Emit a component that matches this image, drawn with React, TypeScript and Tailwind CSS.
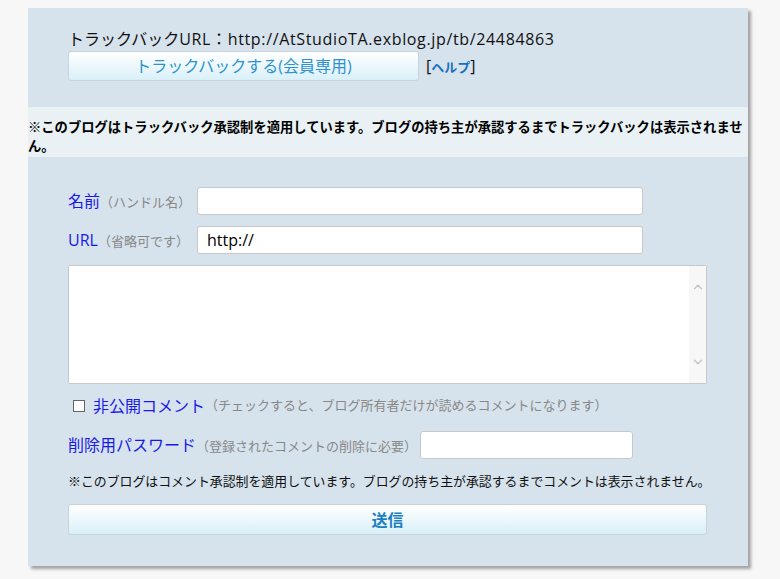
import { ChevronDown, ChevronUp } from "lucide-react";

const FONT = "font-['Open_Sans','Noto_Sans_CJK_JP',sans-serif]";

export default function App() {
  return (
    <div className={`min-h-screen bg-[#f7f7f7] pt-2 pl-[28px] ${FONT}`}>
      <div className="w-[720px] bg-[#d6e2ec] shadow-[3px_3px_3px_rgba(0,0,0,0.35)]">
        {/* trackback */}
        <div className="px-[40px] pt-[21px] pb-[26px]">
          <p className="text-[16px] leading-[20px] text-[#111]">
            トラックバック<span className="tracking-[0.65px]">URL：http://AtStudioTA.exblog.jp/tb/24484863</span>
          </p>
          <div className="mt-[2px] flex items-center gap-[7px]">
            <button
              type="button"
              className="h-[30px] w-[351px] rounded-[3px] border border-[#c9d3dc] bg-gradient-to-b from-white to-[#d9f0f8] text-[16px] text-[#2f92cf]"
            >
              トラックバックする(会員専用)
            </button>
            <span className="text-[16px] text-[#111]">
              [<a className="font-['Noto_Sans_CJK_JP',sans-serif] text-[13px] font-bold text-[#1670c0]">ヘルプ</a>]
            </span>
          </div>
        </div>

        {/* trackback notice */}
        <div className="bg-[#e9f1f4] pt-[10px] pb-[2px]">
          <p className="font-['Noto_Sans_CJK_JP',sans-serif] text-[13.3px] leading-[19px] font-bold text-black">
            ※このブログはトラックバック承認制を適用しています。ブログの持ち主が承認するまでトラックバックは表示されません。
          </p>
        </div>

        {/* comment form */}
        <form className="px-[40px] pt-[30px] pb-[31px]">
          <div className="flex items-center">
            <label className="w-[129px] text-[16px] text-[#1a1ae8]">
              名前<span className="text-[13px] text-[#888]">（ハンドル名）</span>
            </label>
            <input className="h-[28px] w-[446px] rounded-[3px] border border-[#c8c8c8] bg-white px-2 text-[16px] outline-none" />
          </div>
          <div className="mt-[11px] flex items-center">
            <label className="w-[129px] text-[16px] text-[#1a1ae8]">
              URL<span className="text-[13px] text-[#888]">（省略可です）</span>
            </label>
            <input
              defaultValue="http://"
              className="h-[28px] w-[446px] rounded-[3px] border border-[#c8c8c8] bg-white px-[9px] text-[16px] text-black outline-none"
            />
          </div>
          <div className="mt-[11px] flex h-[119px] w-[639px] rounded-[2px] border border-[#c8c8c8] bg-white">
            <textarea className="flex-1 resize-none bg-white outline-none" />
            <div className="flex w-[17px] flex-col items-center justify-between bg-[#f7f7f7] py-[14px]">
              <ChevronUp className="h-[14px] w-[14px] text-[#c4c4c4]" strokeWidth={2.5} />
              <ChevronDown className="h-[14px] w-[14px] text-[#c4c4c4]" strokeWidth={2.5} />
            </div>
          </div>

          <div className="mt-[10px] flex items-center pl-[5px]">
            <span className="h-[12px] w-[12px] border border-[#666] bg-white" />
            <span className="ml-[8px] text-[16px] text-[#1a1ae8]">非公開コメント</span>
            <span className="text-[13px] text-[#888]">
              （チェックすると、ブログ所有者だけが読めるコメントになります）
            </span>
          </div>

          <div className="mt-[13px] flex items-center">
            <label className="text-[16px] text-[#1a1ae8]">
              削除用パスワード<span className="text-[13px] text-[#888]">（登録されたコメントの削除に必要）</span>
            </label>
            <input
              type="password"
              className="ml-[3px] h-[28px] w-[213px] rounded-[3px] border border-[#c8c8c8] bg-white px-2 outline-none"
            />
          </div>

          <p className="mt-[12px] whitespace-nowrap text-[12.9px] leading-[20px] text-[#111]">
            ※このブログはコメント承認制を適用しています。ブログの持ち主が承認するまでコメントは表示されません。
          </p>

          <button
            type="button"
            className="mt-[13px] h-[31px] w-[639px] rounded-[3px] border border-[#c9d3dc] bg-gradient-to-b from-white to-[#d9f0f8] text-[16px] font-bold text-[#1b7fc0]"
          >
            送信
          </button>
        </form>
      </div>
    </div>
  );
}
